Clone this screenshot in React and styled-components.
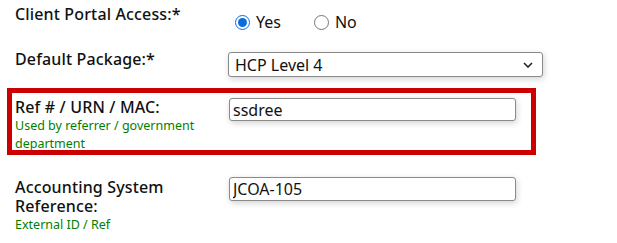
import React from "react";
import styled, { createGlobalStyle } from "styled-components";

const Global = createGlobalStyle`
  html, body { margin: 0; padding: 0; background: #fff; }
  body { font-family: "Noto Sans", "Open Sans", sans-serif; color: #111; }
`;

const Form = styled.form`
  display: flex;
  flex-direction: column;
  padding-left: 7px;
  width: 529px;
`;

const Row = styled.div`
  box-sizing: border-box;
  display: grid;
  grid-template-columns: 214px 1fr;
  align-items: start;
  border: 5px solid ${(p) => (p.$highlight ? "#cc0000" : "transparent")};
  padding: ${(p) => p.$pt}px 3px 0;
  height: ${(p) => p.$h}px;
  overflow: ${(p) => (p.$highlight ? "hidden" : "visible")};
`;

const LabelCol = styled.div`
  display: flex;
  flex-direction: column;
  padding-top: ${(p) => p.$pt || 0}px;
`;

const Label = styled.label`
  font-size: 16px;
  line-height: 19px;
  font-weight: 500;
  color: #111;
  max-width: 200px;
  letter-spacing: 0.15px;
`;

const Hint = styled.span`
  font-size: 12.5px;
  line-height: 18px;
  color: #008000;
  max-width: 200px;
`;

const ValueCol = styled.div`
  display: flex;
  align-items: center;
  padding-top: ${(p) => p.$pt || 0}px;
`;

const RadioOption = styled.label`
  display: inline-flex;
  align-items: center;
  gap: 6px;
  font-size: 16px;
  line-height: 20px;
  color: #111;
  margin-right: ${(p) => (p.$last ? 0 : 27)}px;
  margin-left: 6px;
`;

const Radio = styled.input`
  width: 15px;
  height: 15px;
  margin: 0;
  accent-color: #0b6ce0;
`;

const SelectWrap = styled.div`
  position: relative;
  margin-left: -1px;
`;

const Select = styled.select`
  appearance: none;
  box-sizing: border-box;
  width: 315px;
  height: 25px;
  border: 1px solid #8a8a8a;
  border-radius: 3px;
  background: #fff;
  font-family: "Noto Sans", "Open Sans", sans-serif;
  font-size: 16px;
  color: #111;
  padding: 0 0 0 6px;
  box-shadow: 1px 2px 6px rgba(0, 0, 0, 0.18);
`;

const Chevron = styled.svg`
  position: absolute;
  right: 10px;
  top: 10px;
  pointer-events: none;
`;

const TextInput = styled.input`
  box-sizing: border-box;
  width: 287px;
  height: ${(p) => p.$h}px;
  border: 1px solid #8a8a8a;
  border-radius: 3px;
  font-family: "Noto Sans", "Open Sans", sans-serif;
  font-size: 16px;
  color: #111;
  padding: 0 0 0 3px;
  box-shadow: 1px 2px 6px rgba(0, 0, 0, 0.18);
  outline: none;
`;

export default function App() {
  return (
    <>
      <Global />
      <Form>
        <Row $pt={0} $h={45}>
          <LabelCol>
            <Label>Client Portal Access:*</Label>
          </LabelCol>
          <ValueCol $pt={7}>
            <RadioOption>
              <Radio type="radio" name="portal" defaultChecked />
              Yes
            </RadioOption>
            <RadioOption $last>
              <Radio type="radio" name="portal" />
              No
            </RadioOption>
          </ValueCol>
        </Row>
        <Row $pt={0} $h={43}>
          <LabelCol $pt={0}>
            <Label>Default Package:*</Label>
          </LabelCol>
          <ValueCol $pt={2}>
            <SelectWrap>
              <Select defaultValue="4">
                <option value="4">HCP Level 4</option>
              </Select>
              <Chevron width="10" height="6" viewBox="0 0 10 6">
                <path d="M1 1 L5 5 L9 1" fill="none" stroke="#222" strokeWidth="1.6" />
              </Chevron>
            </SelectWrap>
          </ValueCol>
        </Row>
        <Row $highlight $pt={5} $h={67}>
          <LabelCol>
            <Label>Ref # / URN / MAC:</Label>
            <Hint>Used by referrer / government department</Hint>
          </LabelCol>
          <ValueCol>
            <TextInput $h={23} defaultValue="ssdree" />
          </ValueCol>
        </Row>
        <Row $pt={17} $h={88}>
          <LabelCol $pt={1}>
            <Label>Accounting System Reference:</Label>
            <Hint>External ID / Ref</Hint>
          </LabelCol>
          <ValueCol>
            <TextInput $h={24} defaultValue="JCOA-105" />
          </ValueCol>
        </Row>
      </Form>
    </>
  );
}
